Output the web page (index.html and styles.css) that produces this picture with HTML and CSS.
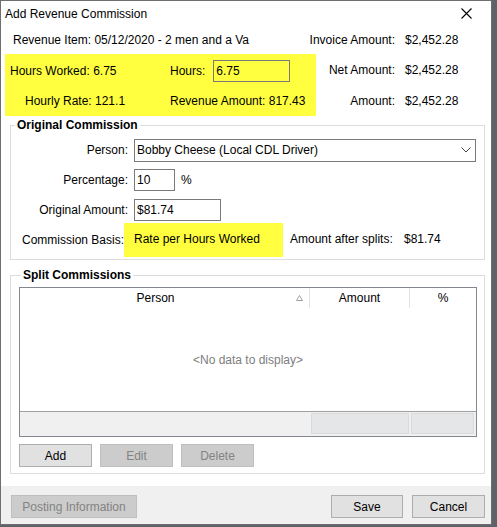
FILE: index.html
```html
<!DOCTYPE html>
<html>
<head>
<meta charset="utf-8">
<link rel="stylesheet" href="styles.css">
</head>
<body>
<div class="window">
  <div class="titlebar">
    <span class="title">Add Revenue Commission</span>
    <svg class="close" width="11" height="11" viewBox="0 0 11 11"><path d="M0.5 0.5 L10.5 10.5 M10.5 0.5 L0.5 10.5" stroke="#000" stroke-width="1.1" fill="none"/></svg>
  </div>
  <div class="content">
    <div class="top">
      <div class="rev-item">Revenue Item: 05/12/2020 - 2 men and a Va</div>
      <div class="hl-hours">
        <span class="c1">Hours Worked: 6.75</span>
        <span class="c2">Hours: <span class="field f-hours">6.75</span></span>
        <span class="c1 indent">Hourly Rate: 121.1</span>
        <span class="c2">Revenue Amount: 817.43</span>
      </div>
      <div class="tl r1">Invoice Amount:</div><div class="tv r1">$2,452.28</div>
      <div class="tl r2">Net Amount:</div><div class="tv r2">$2,452.28</div>
      <div class="tl r3">Amount:</div><div class="tv r3">$2,452.28</div>
    </div>

    <fieldset class="group g-orig">
      <legend>Original Commission</legend>
      <div class="frow">
        <span class="flabel">Person:</span>
        <div class="combo"><span>Bobby Cheese (Local CDL Driver)</span>
          <svg width="10" height="6" viewBox="0 0 10 6"><path d="M0.5 0.5 L5 5 L9.5 0.5" stroke="#444" stroke-width="1" fill="none"/></svg>
        </div>
      </div>
      <div class="frow">
        <span class="flabel">Percentage:</span>
        <span class="field f-pct">10</span><span class="pct">%</span>
      </div>
      <div class="frow">
        <span class="flabel">Original Amount:</span>
        <span class="field f-amt">$81.74</span>
      </div>
      <div class="frow basis">
        <span class="flabel narrow">Commission Basis:</span>
        <span class="hl-basis">Rate per Hours Worked</span>
        <span class="after-lbl">Amount after splits:</span>
        <span>$81.74</span>
      </div>
    </fieldset>

    <fieldset class="group g-split">
      <legend>Split Commissions</legend>
      <div class="grid">
        <div class="ghead">
          <div class="hcell hperson"><span class="htext">Person</span>
            <svg width="7" height="6" viewBox="0 0 7 6"><path d="M3.5 0.5 L6.5 5.5 L0.5 5.5 Z" stroke="#a0a0a0" stroke-width="1" fill="none"/></svg>
          </div>
          <div class="hcell sep">Amount</div>
          <div class="hcell sep">%</div>
        </div>
        <div class="gbody">&lt;No data to display&gt;</div>
        <div class="gfoot">
          <span></span>
          <span class="fcell c-amt"></span>
          <span class="fcell c-pct"></span>
        </div>
      </div>
      <div class="btnrow">
        <button class="btn w73">Add</button>
        <button class="btn w73 disabled">Edit</button>
        <button class="btn w73 disabled">Delete</button>
      </div>
    </fieldset>
  </div>
  <div class="footer">
    <button class="btn disabled posting">Posting Information</button>
    <span class="spacer"></span>
    <button class="btn save">Save</button>
    <button class="btn cancel">Cancel</button>
  </div>
</div>
</body>
</html>
```

FILE: styles.css
```css
html, body {
  margin: 0;
  padding: 0;
}
body {
  background: #5f6266;
  font-family: "Liberation Sans", Arial, sans-serif;
  font-size: 12px;
  color: #000;
  height: 527px;
  overflow: hidden;
}
.window {
  width: 492px;
  height: 525px;
  box-sizing: border-box;
  border: 1px solid #6e6e6e;
  background: #fff;
  display: flex;
  flex-direction: column;
}
.titlebar {
  height: 25px;
  flex: none;
  display: flex;
  align-items: center;
  justify-content: space-between;
  padding: 0 19px 0 4px;
}
.title {
  font-size: 12px;
}
.content {
  flex: 1;
}
.top {
  display: grid;
  grid-template-columns: 301px 89px 1fr;
  grid-template-rows: 28px 32px 30px;
  margin-left: 4px;
  white-space: nowrap;
}
.rev-item {
  grid-column: 1;
  grid-row: 1;
  align-self: center;
  padding-left: 8px;
}
.hl-hours {
  grid-column: 1;
  grid-row: 2 / 4;
  margin-right: -10px;
  background: #ffff40;
  padding-top: 2px;
  display: grid;
  grid-template-columns: 165px 1fr;
  grid-template-rows: 30px 30px;
  align-items: center;
  position: relative;
  z-index: 0;
}
.c1 {
  padding-left: 5px;
}
.c1.indent {
  padding-left: 20px;
}
.c2 {
  display: flex;
  align-items: center;
}
.field {
  display: inline-flex;
  align-items: center;
  box-sizing: border-box;
  height: 22px;
  border: 1px solid #7a7a7a;
  background: #fff;
  padding-left: 2px;
}
.f-hours {
  width: 77px;
  margin-left: 8px;
  background: transparent;
}
.tl {
  grid-column: 2;
  justify-self: end;
  align-self: center;
}
.tv {
  grid-column: 3;
  padding-left: 10px;
  align-self: center;
}
.r1 { grid-row: 1; }
.r2 { grid-row: 2; }
.r3 { grid-row: 3; }

.group {
  border: 1px solid #dcdcdc;
  margin: 2px 6px 0 9px;
  padding: 3px 6px 2px 4px;
  min-width: 0;
}
.group legend {
  font-weight: bold;
  padding: 0 2px;
  line-height: 14px;
}
.frow {
  display: flex;
  align-items: center;
  height: 30px;
  white-space: nowrap;
}
.flabel {
  width: 113px;
  flex: none;
  text-align: right;
  margin-right: 6px;
}
.flabel.narrow {
  width: 109px;
  margin-right: 0;
}
.combo {
  width: 342px;
  height: 23px;
  box-sizing: border-box;
  border: 1px solid #7a7a7a;
  display: flex;
  align-items: center;
  justify-content: space-between;
  padding: 0 4px 0 2px;
}
.f-pct {
  width: 41px;
}
.pct {
  margin-left: 6px;
}
.f-amt {
  width: 87px;
}
.frow.basis {
  height: 34px;
  margin-top: -2px;
}
.hl-basis {
  width: 159px;
  height: 34px;
  box-sizing: border-box;
  background: #ffff40;
  padding-left: 10px;
  display: flex;
  align-items: center;
  padding-bottom: 3px;
}
.after-lbl {
  width: 114px;
  margin-left: 7px;
  padding-bottom: 3px;
}
.basis span:last-child {
  padding-bottom: 3px;
}

.g-split {
  margin-top: 8px;
  padding: 5px 7px 6px 8px;
}
.g-split legend {
  margin-left: 2px;
}
.grid {
  width: 458px;
  height: 150px;
  box-sizing: border-box;
  border: 1px solid #828790;
  display: flex;
  flex-direction: column;
}
.ghead {
  height: 20px;
  flex: none;
  display: grid;
  grid-template-columns: 289px 100px 1fr;
}
.hcell {
  display: flex;
  align-items: center;
  justify-content: center;
}
.hcell.sep {
  border-left: 1px solid #e3e3e3;
}
.hperson {
  justify-content: flex-start;
}
.htext {
  width: 271px;
  text-align: center;
}
.hperson svg {
  margin-left: 5px;
}
.gbody {
  flex: 1;
  display: flex;
  align-items: center;
  justify-content: center;
  color: #7d7d7d;
}
.gfoot {
  height: 25px;
  flex: none;
  box-sizing: border-box;
  border-top: 1px solid #a0a0a0;
  background: #f0f0f0;
  display: grid;
  grid-template-columns: 289px 100px 1fr;
  padding-top: 1px;
}
.fcell {
  height: 21px;
  box-sizing: border-box;
  background: #e4e6e8;
  border: 1px solid #d9dbdd;
  margin-left: 2px;
}
.c-amt { width: 98px; }
.c-pct { width: 63px; }

.btnrow {
  display: flex;
  gap: 8px;
  margin-top: 7px;
}
.btn {
  height: 23px;
  box-sizing: border-box;
  border: 1px solid #adadad;
  background: #e1e1e1;
  font-family: "Liberation Sans", Arial, sans-serif;
  font-size: 12px;
  color: #000;
  padding: 0;
  margin: 0;
}
.btn.disabled {
  background: #cccccc;
  border-color: #bfbfbf;
  color: #838383;
}
.w73 { width: 73px; }

.footer {
  height: 38px;
  flex: none;
  background: #f0f0f0;
  display: flex;
  align-items: flex-start;
  padding: 9px 6px 0 10px;
  box-sizing: border-box;
  gap: 9px;
}
.posting { width: 126px; }
.spacer { flex: 1; }
.save { width: 72px; }
.cancel { width: 73px; }
```
